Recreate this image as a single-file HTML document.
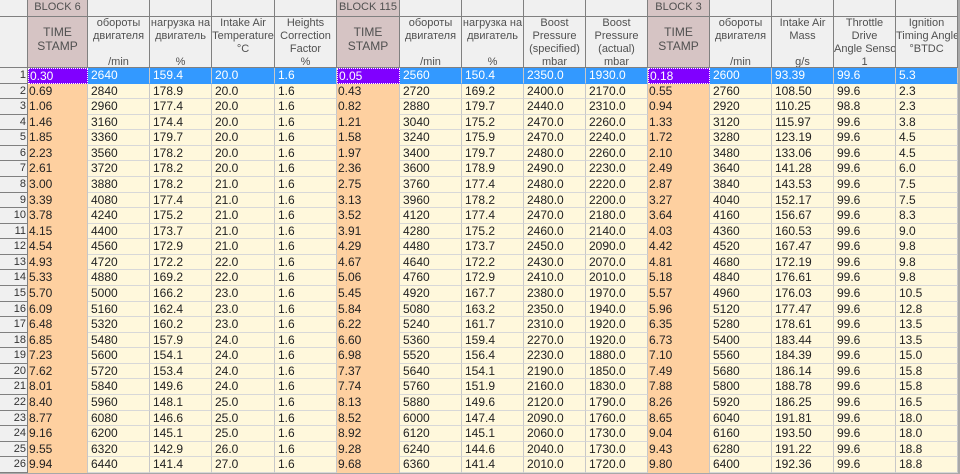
<!DOCTYPE html>
<html><head><meta charset="utf-8"><style>
*{box-sizing:border-box;margin:0;padding:0}
body{width:960px;height:474px;overflow:hidden;background:#a8a8a8;font-family:"Liberation Sans",sans-serif;}
.g{position:absolute;left:0;width:960px;display:grid;grid-template-columns:28px 60px 62px 62px 63px 62px 63px 62px 62px 62px 62px 62px 62px 62px 62px 62px 2px;}
.h1{top:0;height:17px}
.h2{top:17px;height:51px}
.h1>div,.h2>div{background:#f0f0f0;border-right:1px solid #808080;border-bottom:1px solid #808080;color:#505050;font-size:11px;text-align:center;overflow:hidden;white-space:nowrap}
.h1>div{line-height:15px}
.h2>div{line-height:13px;padding-top:0px}
.h1>.p,.h2>.p{background:#d6c4c4}
.h2>.p{padding-top:8px;font-size:12px;line-height:14px}
.h1>div.e,.h2>div.e{background:#a8a8a8;border:none}
.d{height:15.57px;position:absolute;left:0}
.d>div{background:#fff8dc;border-right:1px solid #c8c8c8;border-bottom:1px solid #d8d8d8;font-size:12px;line-height:14px;padding-left:3px;color:#222;white-space:nowrap;overflow:hidden}
.d>div:first-child{background:#f0f0f0;border-right:1px solid #808080;border-bottom:1px solid #808080;text-align:right;padding-right:1px;padding-left:0;color:#333;font-size:11px}
.d>div:nth-child(2),.d>div:nth-child(7),.d>div:nth-child(12){background:#fed0a0;border-bottom:none;padding-left:1px}
.d>div:last-child{background:#a8a8a8;border:none}
.s>div{background:#3399ff;color:#fff;border-bottom:1px solid #3399ff}
.s>div:nth-child(2),.s>div:nth-child(7),.s>div:nth-child(12){background:#8000ff;color:#fff;border:1px dotted #fff}
</style></head><body>
<div class="g h1"><div></div><div class="p">BLOCK 6</div><div></div><div></div><div></div><div></div><div class="p">BLOCK 115</div><div></div><div></div><div></div><div></div><div class="p">BLOCK 3</div><div></div><div></div><div></div><div></div><div class="e"></div></div>
<div class="g h2"><div></div><div class="p">TIME<br>STAMP</div><div>обороты<br>двигателя<br>&nbsp;<br>/min</div><div>нагрузка на<br>двигатель<br>&nbsp;<br>%</div><div>Intake Air<br>Temperature<br>°C</div><div>Heights<br>Correction<br>Factor<br>%</div><div class="p">TIME<br>STAMP</div><div>обороты<br>двигателя<br>&nbsp;<br>/min</div><div>нагрузка на<br>двигатель<br>&nbsp;<br>%</div><div>Boost<br>Pressure<br>(specified)<br>mbar</div><div>Boost<br>Pressure<br>(actual)<br>mbar</div><div class="p">TIME<br>STAMP</div><div>обороты<br>двигателя<br>&nbsp;<br>/min</div><div>Intake Air<br>Mass<br>&nbsp;<br>g/s</div><div>Throttle<br>Drive<br>Angle Sensor<br>1</div><div>Ignition<br>Timing Angle<br>°BTDC</div><div class="e"></div></div>
<div class="g d s" style="top:68px"><div>1</div><div>0.30</div><div>2640</div><div>159.4</div><div>20.0</div><div>1.6</div><div>0.05</div><div>2560</div><div>150.4</div><div>2350.0</div><div>1930.0</div><div>0.18</div><div>2600</div><div>93.39</div><div>99.6</div><div>5.3</div><div></div></div>
<div class="g d" style="top:83.57px"><div>2</div><div>0.69</div><div>2840</div><div>178.9</div><div>20.0</div><div>1.6</div><div>0.43</div><div>2720</div><div>169.2</div><div>2400.0</div><div>2170.0</div><div>0.55</div><div>2760</div><div>108.50</div><div>99.6</div><div>2.3</div><div></div></div>
<div class="g d" style="top:99.14px"><div>3</div><div>1.06</div><div>2960</div><div>177.4</div><div>20.0</div><div>1.6</div><div>0.82</div><div>2880</div><div>179.7</div><div>2440.0</div><div>2310.0</div><div>0.94</div><div>2920</div><div>110.25</div><div>98.8</div><div>2.3</div><div></div></div>
<div class="g d" style="top:114.71px"><div>4</div><div>1.46</div><div>3160</div><div>174.4</div><div>20.0</div><div>1.6</div><div>1.21</div><div>3040</div><div>175.2</div><div>2470.0</div><div>2260.0</div><div>1.33</div><div>3120</div><div>115.97</div><div>99.6</div><div>3.8</div><div></div></div>
<div class="g d" style="top:130.28px"><div>5</div><div>1.85</div><div>3360</div><div>179.7</div><div>20.0</div><div>1.6</div><div>1.58</div><div>3240</div><div>175.9</div><div>2470.0</div><div>2240.0</div><div>1.72</div><div>3280</div><div>123.19</div><div>99.6</div><div>4.5</div><div></div></div>
<div class="g d" style="top:145.85px"><div>6</div><div>2.23</div><div>3560</div><div>178.2</div><div>20.0</div><div>1.6</div><div>1.97</div><div>3400</div><div>179.7</div><div>2480.0</div><div>2260.0</div><div>2.10</div><div>3480</div><div>133.06</div><div>99.6</div><div>4.5</div><div></div></div>
<div class="g d" style="top:161.42px"><div>7</div><div>2.61</div><div>3720</div><div>178.2</div><div>20.0</div><div>1.6</div><div>2.36</div><div>3600</div><div>178.9</div><div>2490.0</div><div>2230.0</div><div>2.49</div><div>3640</div><div>141.28</div><div>99.6</div><div>6.0</div><div></div></div>
<div class="g d" style="top:176.99px"><div>8</div><div>3.00</div><div>3880</div><div>178.2</div><div>21.0</div><div>1.6</div><div>2.75</div><div>3760</div><div>177.4</div><div>2480.0</div><div>2220.0</div><div>2.87</div><div>3840</div><div>143.53</div><div>99.6</div><div>7.5</div><div></div></div>
<div class="g d" style="top:192.56px"><div>9</div><div>3.39</div><div>4080</div><div>177.4</div><div>21.0</div><div>1.6</div><div>3.13</div><div>3960</div><div>178.2</div><div>2480.0</div><div>2200.0</div><div>3.27</div><div>4040</div><div>152.17</div><div>99.6</div><div>7.5</div><div></div></div>
<div class="g d" style="top:208.13px"><div>10</div><div>3.78</div><div>4240</div><div>175.2</div><div>21.0</div><div>1.6</div><div>3.52</div><div>4120</div><div>177.4</div><div>2470.0</div><div>2180.0</div><div>3.64</div><div>4160</div><div>156.67</div><div>99.6</div><div>8.3</div><div></div></div>
<div class="g d" style="top:223.7px"><div>11</div><div>4.15</div><div>4400</div><div>173.7</div><div>21.0</div><div>1.6</div><div>3.91</div><div>4280</div><div>175.2</div><div>2460.0</div><div>2140.0</div><div>4.03</div><div>4360</div><div>160.53</div><div>99.6</div><div>9.0</div><div></div></div>
<div class="g d" style="top:239.27px"><div>12</div><div>4.54</div><div>4560</div><div>172.9</div><div>21.0</div><div>1.6</div><div>4.29</div><div>4480</div><div>173.7</div><div>2450.0</div><div>2090.0</div><div>4.42</div><div>4520</div><div>167.47</div><div>99.6</div><div>9.8</div><div></div></div>
<div class="g d" style="top:254.84px"><div>13</div><div>4.93</div><div>4720</div><div>172.2</div><div>22.0</div><div>1.6</div><div>4.67</div><div>4640</div><div>172.2</div><div>2430.0</div><div>2070.0</div><div>4.81</div><div>4680</div><div>172.19</div><div>99.6</div><div>9.8</div><div></div></div>
<div class="g d" style="top:270.41px"><div>14</div><div>5.33</div><div>4880</div><div>169.2</div><div>22.0</div><div>1.6</div><div>5.06</div><div>4760</div><div>172.9</div><div>2410.0</div><div>2010.0</div><div>5.18</div><div>4840</div><div>176.61</div><div>99.6</div><div>9.8</div><div></div></div>
<div class="g d" style="top:285.98px"><div>15</div><div>5.70</div><div>5000</div><div>166.2</div><div>23.0</div><div>1.6</div><div>5.45</div><div>4920</div><div>167.7</div><div>2380.0</div><div>1970.0</div><div>5.57</div><div>4960</div><div>176.03</div><div>99.6</div><div>10.5</div><div></div></div>
<div class="g d" style="top:301.55px"><div>16</div><div>6.09</div><div>5160</div><div>162.4</div><div>23.0</div><div>1.6</div><div>5.84</div><div>5080</div><div>163.2</div><div>2350.0</div><div>1940.0</div><div>5.96</div><div>5120</div><div>177.47</div><div>99.6</div><div>12.8</div><div></div></div>
<div class="g d" style="top:317.12px"><div>17</div><div>6.48</div><div>5320</div><div>160.2</div><div>23.0</div><div>1.6</div><div>6.22</div><div>5240</div><div>161.7</div><div>2310.0</div><div>1920.0</div><div>6.35</div><div>5280</div><div>178.61</div><div>99.6</div><div>13.5</div><div></div></div>
<div class="g d" style="top:332.69px"><div>18</div><div>6.85</div><div>5480</div><div>157.9</div><div>24.0</div><div>1.6</div><div>6.60</div><div>5360</div><div>159.4</div><div>2270.0</div><div>1920.0</div><div>6.73</div><div>5400</div><div>183.44</div><div>99.6</div><div>13.5</div><div></div></div>
<div class="g d" style="top:348.26px"><div>19</div><div>7.23</div><div>5600</div><div>154.1</div><div>24.0</div><div>1.6</div><div>6.98</div><div>5520</div><div>156.4</div><div>2230.0</div><div>1880.0</div><div>7.10</div><div>5560</div><div>184.39</div><div>99.6</div><div>15.0</div><div></div></div>
<div class="g d" style="top:363.83px"><div>20</div><div>7.62</div><div>5720</div><div>153.4</div><div>24.0</div><div>1.6</div><div>7.37</div><div>5640</div><div>154.1</div><div>2190.0</div><div>1850.0</div><div>7.49</div><div>5680</div><div>186.14</div><div>99.6</div><div>15.8</div><div></div></div>
<div class="g d" style="top:379.4px"><div>21</div><div>8.01</div><div>5840</div><div>149.6</div><div>24.0</div><div>1.6</div><div>7.74</div><div>5760</div><div>151.9</div><div>2160.0</div><div>1830.0</div><div>7.88</div><div>5800</div><div>188.78</div><div>99.6</div><div>15.8</div><div></div></div>
<div class="g d" style="top:394.97px"><div>22</div><div>8.40</div><div>5960</div><div>148.1</div><div>25.0</div><div>1.6</div><div>8.13</div><div>5880</div><div>149.6</div><div>2120.0</div><div>1790.0</div><div>8.26</div><div>5920</div><div>186.25</div><div>99.6</div><div>16.5</div><div></div></div>
<div class="g d" style="top:410.54px"><div>23</div><div>8.77</div><div>6080</div><div>146.6</div><div>25.0</div><div>1.6</div><div>8.52</div><div>6000</div><div>147.4</div><div>2090.0</div><div>1760.0</div><div>8.65</div><div>6040</div><div>191.81</div><div>99.6</div><div>18.0</div><div></div></div>
<div class="g d" style="top:426.11px"><div>24</div><div>9.16</div><div>6200</div><div>145.1</div><div>25.0</div><div>1.6</div><div>8.92</div><div>6120</div><div>145.1</div><div>2060.0</div><div>1730.0</div><div>9.04</div><div>6160</div><div>193.50</div><div>99.6</div><div>18.0</div><div></div></div>
<div class="g d" style="top:441.68px"><div>25</div><div>9.55</div><div>6320</div><div>142.9</div><div>26.0</div><div>1.6</div><div>9.28</div><div>6240</div><div>144.6</div><div>2040.0</div><div>1730.0</div><div>9.43</div><div>6280</div><div>191.22</div><div>99.6</div><div>18.8</div><div></div></div>
<div class="g d" style="top:457.25px"><div>26</div><div>9.94</div><div>6440</div><div>141.4</div><div>27.0</div><div>1.6</div><div>9.68</div><div>6360</div><div>141.4</div><div>2010.0</div><div>1720.0</div><div>9.80</div><div>6400</div><div>192.36</div><div>99.6</div><div>18.8</div><div></div></div>
</body></html>
